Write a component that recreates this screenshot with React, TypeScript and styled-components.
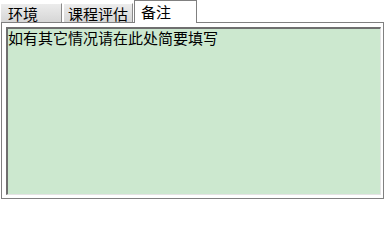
import { createGlobalStyle } from "styled-components";
import styled from "styled-components";

const GlobalStyle = createGlobalStyle`
  html, body {
    margin: 0;
    padding: 0;
    background: #ffffff;
  }
  body {
    font-family: "Noto Sans CJK SC", "Noto Sans", sans-serif;
  }
`;

const Frame = styled.div`
  width: 385px;
  height: 200px;
  display: flex;
  flex-direction: column;
  background: #ffffff;
`;

const TabBar = styled.div`
  display: flex;
  align-items: flex-end;
  height: 22px;
  position: relative;
  z-index: 1;
`;

const Tab = styled.div<{ $active?: boolean; $width: number; $pad: number }>`
  box-sizing: border-box;
  width: ${(p) => p.$width}px;
  padding-left: ${(p) => p.$pad}px;
  font-size: 15px;
  line-height: 16px;
  color: #000000;
  white-space: nowrap;
  ${(p) =>
    p.$active
      ? `
    height: 23px;
    padding-top: 3px;
    background: #ffffff;
    border: 1px solid #808080;
    border-bottom: none;
    margin-bottom: -1px;
  `
      : `
    height: 19px;
    padding-top: 2px;
    background: linear-gradient(#ececec, #d6d6d6);
    border-top: 1px solid #ffffff;
    border-left: 1px solid #ffffff;
    border-right: 1px solid #8a8a8a;
    margin-right: 1px;
  `}
`;

const Panel = styled.div`
  flex: 1;
  margin: 0 1px 1px 1px;
  border: 1px solid #808080;
  padding: 4px 2px 3px 4px;
  display: flex;
  background: #ffffff;
`;

const Memo = styled.div`
  flex: 1;
  box-sizing: border-box;
  background: #cce8cf;
  border-top: 2px solid #6f6f6f;
  border-left: 2px solid #6f6f6f;
  border-right: 1px solid #e4e4e4;
  border-bottom: 1px solid #e4e4e4;
  padding: 1px 0 0 0;
  font-size: 15px;
  line-height: 16px;
  color: #000000;
`;

export default function App() {
  return (
    <>
      <GlobalStyle />
      <Frame>
        <TabBar>
          <Tab $width={62} $pad={7}>环境</Tab>
          <Tab $width={70} $pad={4}>课程评估</Tab>
          <Tab $active $width={63} $pad={6}>备注</Tab>
        </TabBar>
        <Panel>
          <Memo>如有其它情况请在此处简要填写</Memo>
        </Panel>
      </Frame>
    </>
  );
}
